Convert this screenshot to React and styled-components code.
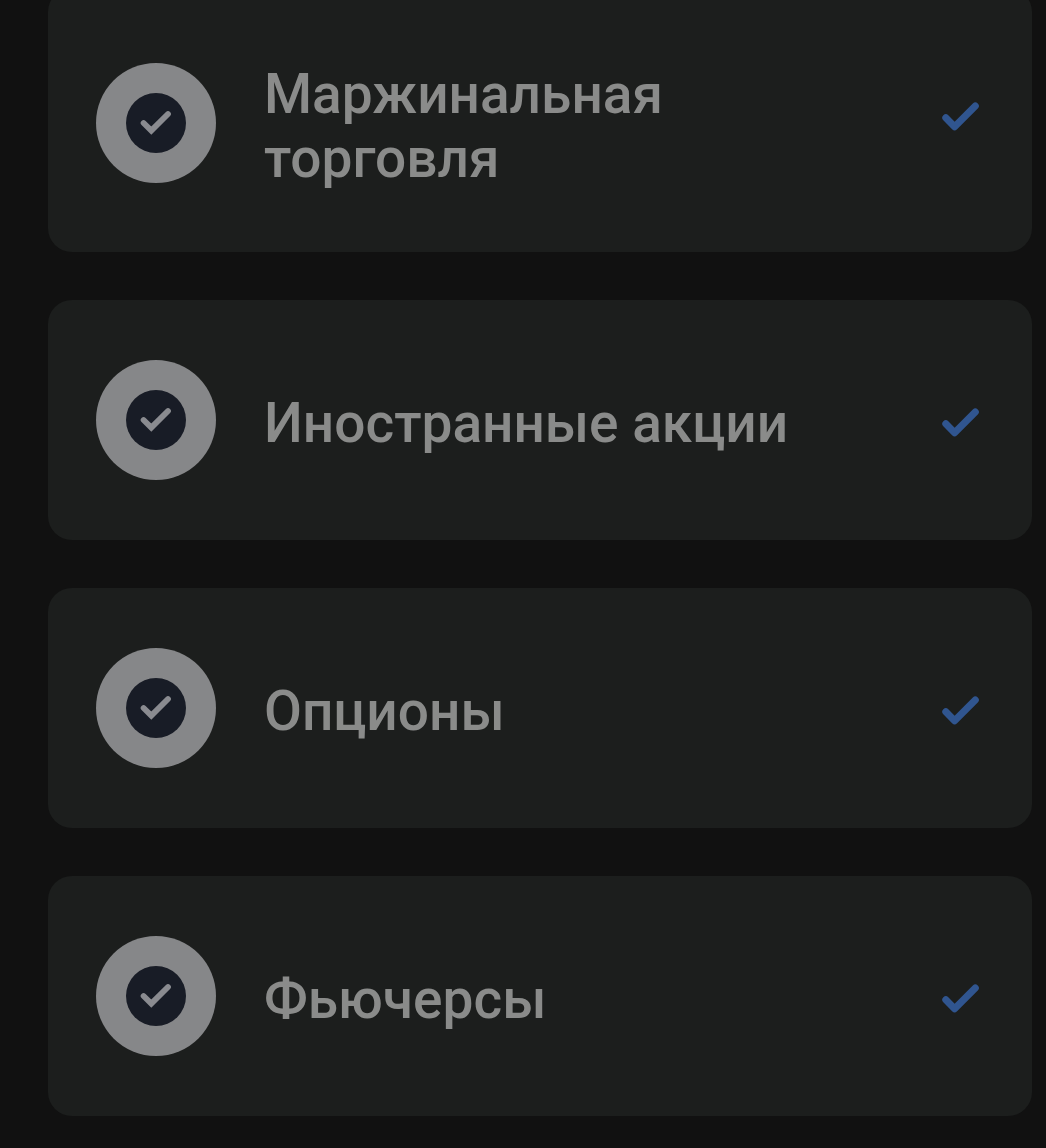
import React from "react"
import styled, { createGlobalStyle } from "styled-components"

const categories = [
  { id: "margin", title: "Маржинальная торговля", tall: true },
  { id: "foreign", title: "Иностранные акции" },
  { id: "options", title: "Опционы" },
  { id: "futures", title: "Фьючерсы" },
]

const Badge = () => (
  <BadgeIcon viewBox="0 0 120 120" aria-hidden="true">
    <circle cx="60" cy="60" r="60" fill="#868789" />
    <circle cx="60" cy="60" r="30" fill="#181c26" />
    <path
      d="M47.6 60 L55.3 67.6 L72 51"
      fill="none"
      stroke="#8a8b90"
      strokeWidth="5.8"
      strokeLinecap="round"
      strokeLinejoin="miter"
    />
  </BadgeIcon>
)

const Category = ({ title, tall }) => (
  <Card $tall={tall}>
    <Badge />
    <Title>{title}</Title>
    <Tick $tall={tall} viewBox="0 0 48 48" role="img" aria-label="Доступно">
      <path d="M9.8 25.7 L18.6 34.7 L39.3 14" />
    </Tick>
  </Card>
)

const App = () => (
  <>
    <GlobalStyle />
    <List>
      {categories.map(category => (
        <Category key={category.id} {...category} />
      ))}
    </List>
  </>
)

const GlobalStyle = createGlobalStyle`
  * {
    box-sizing: border-box;
  }
  body {
    margin: 0;
    background-color: #111111;
    color: #8a8b8a;
    font-family: Roboto, "Noto Sans", sans-serif;
  }
`

const List = styled.ul`
  display: flex;
  flex-direction: column;
  gap: 48px;
  list-style: none;
  /* the first card is scrolled slightly past the top edge */
  margin: -12px 0 0;
  padding: 0 14px 32px 48px;
`

const Card = styled.li`
  display: flex;
  align-items: center;
  gap: 48px;
  min-height: ${({ $tall }) => ($tall ? "264px" : "240px")};
  padding: ${({ $tall }) => ($tall ? "54px 48px 48px" : "48px")};
  border-radius: 24px;
  background-color: #1c1e1d;
`

const BadgeIcon = styled.svg`
  flex: none;
  width: 120px;
  height: 120px;
`

const Title = styled.h2`
  flex: 1;
  margin: 0;
  padding-top: 6px;
  font-size: 55px;
  font-weight: 500;
  line-height: 64px;
`

const Tick = styled.svg`
  flex: none;
  width: 48px;
  height: 48px;
  margin-top: ${({ $tall }) => ($tall ? "0" : "4px")};
  margin-bottom: ${({ $tall }) => ($tall ? "14px" : "0")};
  fill: none;
  stroke: #30558f;
  stroke-width: 7;
  stroke-linecap: round;
  stroke-linejoin: round;
`

export default App
